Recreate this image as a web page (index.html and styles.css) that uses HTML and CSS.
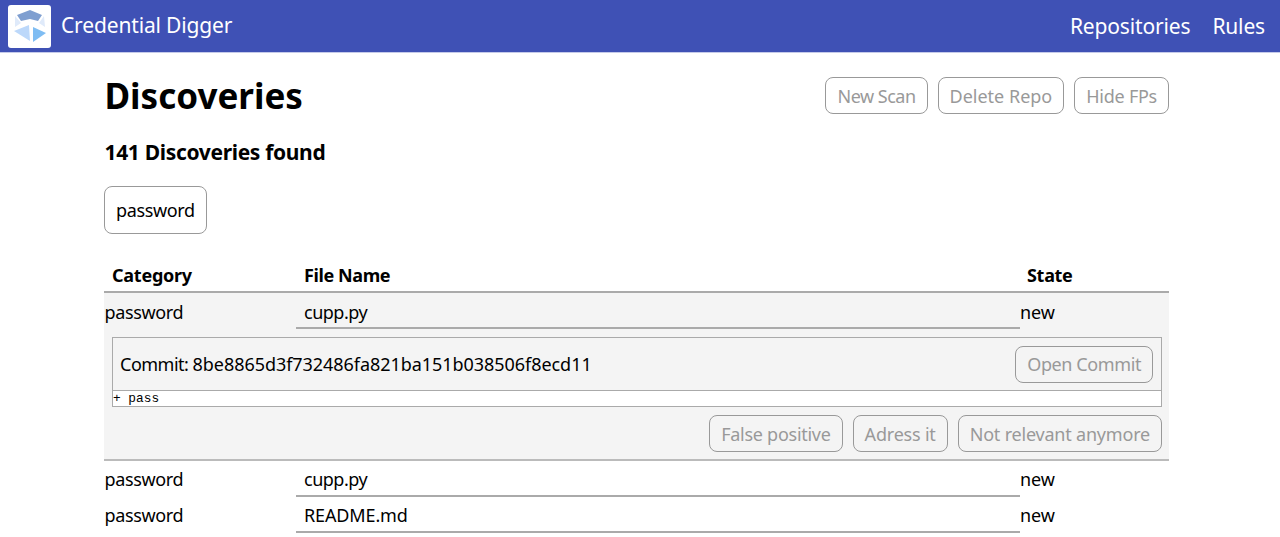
FILE: index.html
```html
<!DOCTYPE html>
<html lang="en">
<head>
<meta charset="utf-8">
<title>Credential Digger</title>
<link rel="stylesheet" href="styles.css">
</head>
<body>
<header class="nav">
  <div class="brand">
    <div class="logo">
      <svg viewBox="0 0 42 42" width="42" height="42">
        <polygon points="8,10 21,5 33,10 29,16 21,14 12,16" fill="#7f9fd0"/>
        <polygon points="6,11 12,18 6,22" fill="#dfeafa"/>
        <polygon points="35,11 30,18 36,22" fill="#dfeafa"/>
        <polygon points="5,26 20,20 21,36" fill="#bcd8fa"/>
        <polygon points="24,22 37,28 24,37" fill="#7fbdf3"/>
      </svg>
    </div>
    <span class="brand-name">Credential Digger</span>
  </div>
  <nav class="nav-links">
    <a class="nav-link">Repositories</a>
    <a class="nav-link">Rules</a>
  </nav>
</header>
<main class="page">
  <div class="title-row">
    <h1 class="title">Discoveries</h1>
    <div class="actions">
      <button class="btn btn-scan">New Scan</button>
      <button class="btn btn-wide">Delete Repo</button>
      <button class="btn btn-hide">Hide FPs</button>
    </div>
  </div>
  <h2 class="count">141 Discoveries found</h2>
  <button class="chip">password</button>
  <div class="table">
    <div class="row head">
      <div class="c-cat">Category</div>
      <div class="c-file">File Name</div>
      <div class="c-state">State</div>
    </div>
    <div class="group open">
      <div class="row item">
        <div class="c-cat">password</div>
        <div class="c-file tight">cupp.py</div>
        <div class="c-state">new</div>
      </div>
      <div class="detail">
        <div class="commit-box">
          <div class="commit-bar">
            <span class="commit-text"><span class="commit-label">Commit: </span>8be8865d3f732486fa821ba151b038506f8ecd11</span>
            <button class="btn btn-commit">Open Commit</button>
          </div>
          <pre class="snippet">+ pass</pre>
        </div>
        <div class="detail-actions">
          <button class="btn btn-false">False positive</button>
          <button class="btn">Adress it</button>
          <button class="btn">Not relevant anymore</button>
        </div>
      </div>
    </div>
    <div class="row item">
      <div class="c-cat">password</div>
      <div class="c-file tight">cupp.py</div>
      <div class="c-state">new</div>
    </div>
    <div class="row item">
      <div class="c-cat">password</div>
      <div class="c-file">README.md</div>
      <div class="c-state">new</div>
    </div>
  </div>
</main>
</body>
</html>
```
FILE: styles.css
```css
* { box-sizing: border-box; }
html, body { margin: 0; height: 537px; overflow: hidden; }
body { font-family: "Noto Sans", "Open Sans", sans-serif; color: #000; background: #fff; font-size: 18px; letter-spacing: -0.13px; }
.nav { height: 53px; background: #3f51b5; border-bottom: 1px solid #c5cae9; display: flex; justify-content: space-between; align-items: center; padding: 0 15px 0 8px; color: #fff; }
.brand { display: flex; align-items: center; gap: 10px; }
.logo { width: 43px; height: 43px; background: #fff; border-radius: 3px; display: flex; align-items: center; justify-content: center; }
.logo svg { display: block; }
.brand-name { font-size: 21px; letter-spacing: -0.15px; position: relative; top: -1px; }
.nav-links { display: flex; gap: 22px; }
.nav-link { font-size: 21px; letter-spacing: -0.15px; color: #fff; }
.page { width: 1065px; margin-left: 104px; }
.title-row { display: flex; justify-content: space-between; align-items: flex-start; padding-top: 24px; height: 84px; }
.title { margin: 0; padding-left: 0.5px; font-size: 35px; font-weight: 700; line-height: 38px; letter-spacing: 0; }
.actions { display: flex; gap: 10px; }
.btn { font: inherit; font-size: 18px; letter-spacing: -0.2px; height: 37px; padding: 0 11px; background: transparent; color: #999; border: 1px solid #999; border-radius: 8px; white-space: nowrap; }
.btn-scan { letter-spacing: -0.5px; }
.btn-wide { letter-spacing: 0; }
.btn-hide { letter-spacing: -0.25px; }
.btn-commit { letter-spacing: -0.4px; }
.btn-false { letter-spacing: -0.27px; }
.count { margin: 0; padding-left: 0.5px; font-size: 21px; font-weight: 700; line-height: 30px; letter-spacing: -0.33px; }
.chip { font: inherit; font-size: 18px; letter-spacing: -0.35px; display: block; margin-top: 19px; height: 48px; padding: 0 11px; background: #fff; color: #000; border: 1px solid #999; border-radius: 8px; }
.table { margin-top: 23px; }
.row { display: flex; }
.c-cat { width: 192px; padding-left: 0.5px; letter-spacing: -0.35px; }
.c-file { width: 724px; padding-left: 8px; }
.c-state { flex: 1; }
.tight { letter-spacing: -0.5px; }
.head { height: 36px; padding-top: 1px; font-weight: 700; align-items: center; border-bottom: 2px solid #aaa; padding-left: 8px; letter-spacing: -0.3px; }
.head .c-cat { width: 184px; padding-left: 0; letter-spacing: -0.25px; }
.head .c-file { letter-spacing: -0.4px; }
.head .c-state { padding-left: 7px; }
.item { height: 36px; line-height: 36px; }
.item .c-file { border-bottom: 2px solid #aaa; }
.group.open { background: #f4f4f4; border-bottom: 2px solid #bbb; }
.group.open .item { line-height: 38px; }
.detail { padding: 8px 7px 7px 8px; }
.commit-box { border: 1px solid #aaa; }
.commit-bar { height: 53px; display: flex; justify-content: space-between; align-items: center; padding: 0 8px 0 7px; border-bottom: 1px solid #aaa; }
.commit-text { letter-spacing: -0.05px; }
.commit-label { letter-spacing: -0.5px; }
.snippet { margin: 0; height: 15px; line-height: 15px; background: #fff; font-family: "Liberation Mono", monospace; font-size: 12.8px; letter-spacing: 0; }
.detail-actions { display: flex; justify-content: flex-end; gap: 10px; margin-top: 8px; }
```
